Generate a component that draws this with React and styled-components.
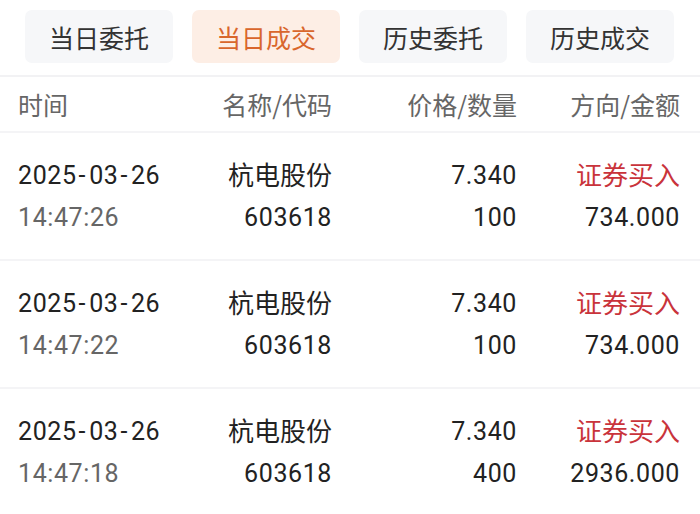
import styled, { createGlobalStyle } from 'styled-components';

const GlobalStyle = createGlobalStyle`
  body {
    margin: 0;
    background: #fff;
    font-family: Roboto, 'Noto Sans CJK SC', sans-serif;
  }
`;

const Page = styled.div`
  width: 700px;
  height: 514px;
  overflow: hidden;
  background: #fff;
`;

const TabBar = styled.nav`
  display: flex;
  gap: 19px;
  padding: 10px 0 12px 25px;
  border-bottom: 2px solid #f2f2f4;
`;

const Tab = styled.div`
  width: 148px;
  height: 53px;
  border-radius: 7px;
  display: flex;
  align-items: center;
  justify-content: center;
  font-family: 'Noto Sans CJK SC', sans-serif;
  font-size: 25px;
  color: ${props => (props.$active ? '#d9662c' : '#333')};
  background: ${props => (props.$active ? '#fdeee5' : '#f6f7f9')};
`;

const Grid = styled.div`
  display: grid;
  grid-template-columns: 150px 164px 185px 163px;
  padding: 0 20px 0 18px;
`;

const HeaderRow = styled(Grid)`
  height: 54px;
  align-items: center;
  border-bottom: 2px solid #f4f4f6;
`;

const HeadCell = styled.div`
  font-family: 'Noto Sans CJK SC', sans-serif;
  font-size: 25px;
  color: #666;
  text-align: ${props => (props.$left ? 'left' : 'right')};
`;

const Row = styled(Grid)`
  padding-top: 22px;
  padding-bottom: 20px;
  border-bottom: 2px solid #f4f4f6;
`;

const Cell = styled.div`
  display: flex;
  flex-direction: column;
  align-items: ${props => (props.$left ? 'flex-start' : 'flex-end')};
`;

const Line = styled.span`
  height: 42px;
  line-height: 42px;
  font-size: ${props => (props.$num ? '25px' : '26px')};
  letter-spacing: ${props => (props.$num ? '0.6px' : '0')};
  color: ${props => props.$color || '#222'};
  white-space: nowrap;
`;

const Dash = styled.span`
  margin: 0 3px 0 2px;
`;

const trades = [
  { date: '2025-03-26', time: '14:47:26', qty: '100', amount: '734.000' },
  { date: '2025-03-26', time: '14:47:22', qty: '100', amount: '734.000' },
  { date: '2025-03-26', time: '14:47:18', qty: '400', amount: '2936.000' },
];

function DateText({ value }) {
  const parts = value.split('-');
  return parts.map((p, i) => (
    <span key={i}>
      {i > 0 && <Dash>-</Dash>}
      {p}
    </span>
  ));
}

export default function App() {
  return (
    <Page>
      <GlobalStyle />
      <TabBar>
        <Tab>当日委托</Tab>
        <Tab $active>当日成交</Tab>
        <Tab>历史委托</Tab>
        <Tab>历史成交</Tab>
      </TabBar>
      <HeaderRow>
        <HeadCell $left>时间</HeadCell>
        <HeadCell>名称/代码</HeadCell>
        <HeadCell>价格/数量</HeadCell>
        <HeadCell>方向/金额</HeadCell>
      </HeaderRow>
      {trades.map((t, i) => (
        <Row key={i}>
          <Cell $left>
            <Line $num><DateText value={t.date} /></Line>
            <Line $num $color='#666'>{t.time}</Line>
          </Cell>
          <Cell>
            <Line>杭电股份</Line>
            <Line $num>603618</Line>
          </Cell>
          <Cell>
            <Line $num>7.340</Line>
            <Line $num>{t.qty}</Line>
          </Cell>
          <Cell>
            <Line $color='#c9333b'>证券买入</Line>
            <Line $num>{t.amount}</Line>
          </Cell>
        </Row>
      ))}
    </Page>
  );
}
